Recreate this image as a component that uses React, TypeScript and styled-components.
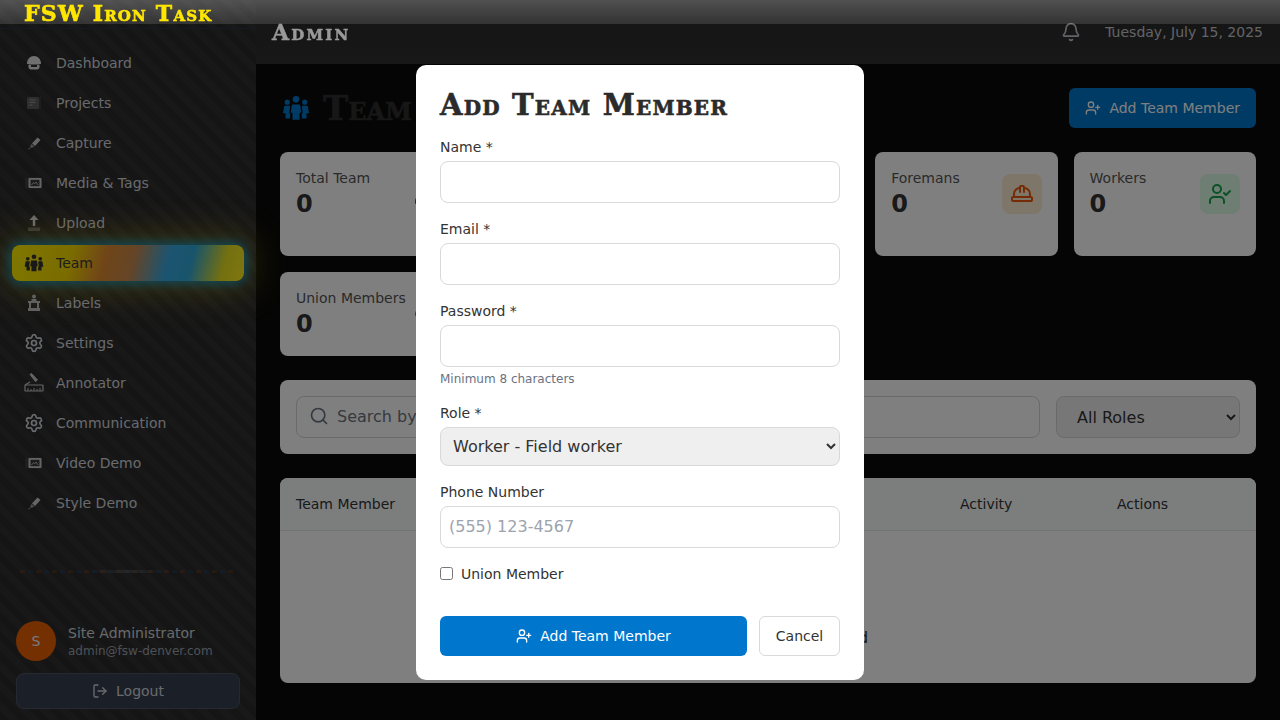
import React from "react";
import styled, { createGlobalStyle } from "styled-components";
import { Bell, HardHat, LogOut, Search, Settings, Shield, UserCheck, UserCog, UserPlus, Users, BadgeCheck } from "lucide-react";

const GlobalStyle = createGlobalStyle`
  html, body {
    margin: 0;
    height: 100%;
    overflow: hidden;
    background: #0a0a0a;
    font-family: "DejaVu Sans", sans-serif;
  }
  * {
    box-sizing: border-box;
  }
`;

const display = `"DejaVu Serif", "Liberation Serif", serif`;

const Shell = styled.div`
  display: flex;
  height: 720px;
  width: 1280px;
`;

const Sidebar = styled.aside`
  width: 256px;
  flex-shrink: 0;
  display: flex;
  flex-direction: column;
  background: repeating-linear-gradient(45deg, #2a2a2a 0 7px, #313131 7px 14px);
`;

const SidebarTop = styled.div`
  height: 29px;
  flex-shrink: 0;
  border-bottom: 1px solid #2a3340;
`;

const Nav = styled.nav`
  display: flex;
  flex-direction: column;
  gap: 4px;
  padding: 16px 12px 0;
`;

const NavItem = styled.div<{ $active?: boolean }>`
  height: 36px;
  display: flex;
  align-items: center;
  gap: 12px;
  padding: 0 12px;
  border-radius: 8px;
  font-size: 14px;
  color: ${(p) => (p.$active ? "#3a3a3a" : "#d1d5db")};
  background: ${(p) =>
    p.$active
      ? "linear-gradient(105deg, #ffee00 0%, #f5d800 26%, #e08a30 40%, #c98a50 52%, #3aa8e0 66%, #30a8d8 76%, #e8e020 90%, #ffee22 100%)"
      : "transparent"};
  box-shadow: ${(p) =>
    p.$active ? "0 0 12px 2px rgba(0, 174, 255, 0.75), 0 0 34px 8px rgba(255, 221, 0, 0.35)" : "none"};
`;

const NavIconBox = styled.span`
  width: 20px;
  height: 20px;
  display: flex;
  align-items: center;
  justify-content: center;
  flex-shrink: 0;
`;

const SidebarFooter = styled.div`
  margin-top: auto;
  padding: 0 16px 11px;
`;

const Divider = styled.div`
  height: 3px;
  margin: 0 4px 48px;
  opacity: 0.35;
  background:
    linear-gradient(90deg, transparent 30%, rgba(200, 200, 200, 0.5) 50%, transparent 68%),
    repeating-linear-gradient(90deg, #8a4a1a 0 5px, transparent 5px 8px, #1f4a6e 8px 13px, transparent 13px 16px);
`;

const UserRow = styled.div`
  display: flex;
  align-items: center;
  gap: 12px;
  margin-bottom: 12px;
`;

const Avatar = styled.div`
  width: 40px;
  height: 40px;
  border-radius: 50%;
  background: #e86000;
  color: #f3f4f6;
  display: flex;
  align-items: center;
  justify-content: center;
  font-size: 14px;
`;

const UserName = styled.div`
  font-size: 14px;
  line-height: 20px;
  color: #d1d5db;
`;

const UserEmail = styled.div`
  font-size: 12px;
  line-height: 16px;
  color: #9ca3af;
`;

const LogoutButton = styled.button`
  width: 100%;
  height: 36px;
  display: flex;
  align-items: center;
  justify-content: center;
  gap: 8px;
  border: 1px solid #4b5563;
  border-radius: 8px;
  background: #374151;
  color: #d1d5db;
  font: inherit;
  font-size: 14px;
`;

const Main = styled.main`
  flex: 1;
  min-width: 0;
  display: flex;
  flex-direction: column;
`;

const Header = styled.header`
  height: 64px;
  flex-shrink: 0;
  display: flex;
  align-items: center;
  justify-content: space-between;
  padding: 0 17px 0 16px;
  background: linear-gradient(180deg, #282828, #303030);
`;

const AdminTitle = styled.h2`
  position: relative;
  z-index: 11;
  margin: 0;
  font-family: ${display};
  font-variant: small-caps;
  font-size: 22px;
  font-weight: 700;
  letter-spacing: 2.2px;
  color: #9a9a9a;
  -webkit-text-stroke: 0.5px #9a9a9a;
`;

const HeaderRight = styled.div`
  display: flex;
  align-items: center;
  gap: 24px;
  color: #c4c8cf;
  font-size: 14px;
`;

const Content = styled.div`
  padding: 24px;
`;

const TitleRow = styled.div`
  display: flex;
  align-items: center;
  justify-content: space-between;
  margin-bottom: 24px;
`;

const PageTitle = styled.h1`
  display: flex;
  align-items: center;
  gap: 13px;
  margin: 0 0 0 2px;
  font-family: ${display};
  font-variant: small-caps;
  font-size: 34px;
  font-weight: 700;
  color: #2e2e2e;
  -webkit-text-stroke: 0.6px #2e2e2e;
`;

const PrimaryButton = styled.button<{ $grow?: boolean }>`
  height: 40px;
  display: flex;
  align-items: center;
  justify-content: center;
  gap: 8px;
  padding: 0 16px;
  border: none;
  border-radius: 6px;
  background: #0077cc;
  color: #fff;
  font: inherit;
  font-size: 14px;
  flex: ${(p) => (p.$grow ? 1 : "none")};
`;

const StatsGrid = styled.div`
  display: grid;
  grid-template-columns: repeat(5, 1fr);
  gap: 16px;
  margin-bottom: 24px;
`;

const StatCard = styled.div`
  display: flex;
  align-items: flex-start;
  justify-content: space-between;
  padding: 16px;
  border-radius: 8px;
  background: #fff;
`;

const StatText = styled.div`
  min-width: 0;
`;

const StatLabel = styled.div`
  font-size: 14px;
  line-height: 20px;
  color: #555;
`;

const StatValue = styled.div`
  font-size: 24px;
  line-height: 32px;
  font-weight: 700;
  color: #333;
`;

const StatIcon = styled.div<{ $bg: string; $fg: string }>`
  width: 40px;
  height: 40px;
  margin-top: 6px;
  flex-shrink: 0;
  display: flex;
  align-items: center;
  justify-content: center;
  border-radius: 8px;
  background: ${(p) => p.$bg};
  color: ${(p) => p.$fg};
`;

const FilterCard = styled.div`
  display: flex;
  gap: 16px;
  padding: 16px;
  margin-bottom: 24px;
  border-radius: 8px;
  background: #fff;
`;

const SearchBox = styled.div`
  flex: 1;
  height: 42px;
  display: flex;
  align-items: center;
  gap: 8px;
  padding: 0 12px 2px;
  border: 1px solid #d1d5db;
  border-radius: 8px;
  color: #6b7280;
  font-size: 16px;
`;

const RoleFilter = styled.select`
  width: 184px;
  height: 42px;
  padding: 0 16px;
  border: 1px solid #d1d5db;
  border-radius: 8px;
  background: #efefef;
  color: #333;
  font: inherit;
  font-size: 16px;
`;

const TableCard = styled.div`
  height: 205px;
  display: flex;
  flex-direction: column;
  border-radius: 8px;
  background: #fff;
  overflow: hidden;
`;

const TableHead = styled.div`
  height: 53px;
  flex-shrink: 0;
  display: grid;
  grid-template-columns: 221px 221px 222px 157px 123px;
  align-items: center;
  padding: 0 16px;
  background: #f9fafb;
  border-bottom: 1px solid #e5e7eb;
  font-size: 14px;
  color: #333;
`;

const EmptyState = styled.div`
  flex: 1;
  display: flex;
  align-items: flex-end;
  justify-content: center;
  padding-bottom: 36px;
  font-size: 16px;
  color: #333;
`;

const Overlay = styled.div`
  position: fixed;
  inset: 0;
  z-index: 10;
  display: flex;
  justify-content: center;
  align-items: flex-start;
  padding-top: 65px;
  background: rgba(0, 0, 0, 0.5);
`;

const Modal = styled.div`
  width: 448px;
  padding: 24px;
  border-radius: 10px;
  background: #fff;
`;

const ModalTitle = styled.h2`
  margin: 0 0 16px;
  font-family: ${display};
  font-variant: small-caps;
  font-size: 29px;
  line-height: 32px;
  font-weight: 700;
  letter-spacing: 1.2px;
  color: #2b2b2b;
  -webkit-text-stroke: 0.6px #2b2b2b;
  white-space: nowrap;
`;

const Field = styled.div`
  margin-bottom: 16px;
`;

const Label = styled.label`
  display: block;
  margin-bottom: 4px;
  font-size: 14px;
  line-height: 20px;
  color: #333;
`;

const Input = styled.input`
  display: block;
  width: 100%;
  height: 42px;
  padding: 0 8px 2px;
  border: 1px solid #d9d9d9;
  border-radius: 8px;
  background: #fff;
  font: inherit;
  font-size: 16px;
  color: #333;

  &::placeholder {
    color: #9ca3af;
  }
`;

const Hint = styled.div`
  margin-top: 4px;
  font-size: 12px;
  line-height: 16px;
  color: #6b7280;
`;

const RoleSelect = styled.select`
  display: block;
  width: 100%;
  height: 39px;
  padding: 0 8px;
  border: 1px solid #d9d9d9;
  border-radius: 8px;
  background: #efefef;
  font: inherit;
  font-size: 16px;
  color: #333;
`;

const CheckRow = styled.label`
  height: 20px;
  display: flex;
  align-items: center;
  gap: 8px;
  font-size: 14px;
  color: #333;

  input {
    margin: -1px 0 0;
    width: 13px;
    height: 13px;
  }
`;

const Actions = styled.div`
  display: flex;
  gap: 12px;
  margin-top: 32px;
`;

const CancelButton = styled.button`
  width: 81px;
  height: 40px;
  border: 1px solid #d9d9d9;
  border-radius: 6px;
  background: #fff;
  color: #333;
  font: inherit;
  font-size: 14px;
`;

const TopStrip = styled.div`
  position: fixed;
  top: 0;
  left: 0;
  right: 0;
  height: 24px;
  z-index: 20;
  padding-left: 24px;
  background: linear-gradient(180deg, rgba(255, 255, 255, 0.26), rgba(255, 255, 255, 0.13));
`;

const Logo = styled.div`
  font-family: ${display};
  font-variant: small-caps;
  font-size: 22px;
  line-height: 26px;
  font-weight: 700;
  letter-spacing: 1.2px;
  color: #ffe600;
  -webkit-text-stroke: 0.6px #ffe600;
  white-space: nowrap;
`;

const HelmetIcon = () => (
  <svg width="16" height="16" viewBox="0 0 16 16" fill="#e0e0e0">
    <path d="M1 9C1 4 4 1 8 1s7 3 7 8z" />
    <path d="M2.500 9.500h11v2.500c0 1.500-1 2.500-2.500 2.500H5c-1.500 0-2.500-1-2.500-2.500zM5 10v2h6v-2z" fillRule="evenodd" />
  </svg>
);

const ProjectsIcon = () => (
  <svg width="16" height="16" viewBox="0 0 16 16">
    <rect x="1" y="2" width="12" height="12" rx="1.500" fill="#5c5c5c" />
    <path d="M14 1.500v12" stroke="#4c4c4c" strokeWidth="1" />
    <path d="M3.500 5h6M3.500 7.500h6M3.500 10h3" stroke="#999" strokeWidth="1" />
  </svg>
);

const PencilIcon = () => (
  <svg width="16" height="16" viewBox="0 0 16 16" fill="#cfcfcf">
    <path d="M11.500 2.500l3 2.500-5.500 6-3-2.600z" />
    <path d="M5.500 9l2.800 2.500-3 1.500-1.300-1.300z" fill="#9a9a9a" />
    <path d="M1.500 14l2-1.500 1 1-1 1z" fill="#777" />
  </svg>
);

const MediaIcon = () => (
  <svg width="18" height="14" viewBox="0 0 18 14">
    <rect x="0" y="1.500" width="17" height="11" rx="1" fill="#3c3c3c" />
    <rect x="3.500" y="2" width="13" height="10" rx="1" fill="#c8c8c8" />
    <rect x="5.500" y="3.800" width="9" height="6.400" fill="#3a3a3a" />
    <path d="M6.500 9l2-2.500 1.200 1.300 1.300-1.800 2.200 3" stroke="#c8c8c8" strokeWidth="0.800" fill="none" />
  </svg>
);

const UploadIcon = () => (
  <svg width="16" height="18" viewBox="0 0 16 18" fill="#d8d8d8">
    <path d="M8 1l4.500 5H9.200v6H6.800V6H3.500z" />
    <rect x="2" y="13.500" width="12" height="3.500" fill="#6c6c6c" />
  </svg>
);

const LabelsIcon = () => (
  <svg width="16" height="18" viewBox="0 0 16 18" fill="#c0c0c0">
    <circle cx="8" cy="2.500" r="2" />
    <path d="M5.500 5h5v2h-5z" />
    <path d="M2 7h12v2h-1v5h1v3H2v-3h1V9H2zM5 9v5h6V9z" fillRule="evenodd" />
  </svg>
);

const AnnotatorIcon = () => (
  <svg width="20" height="20" viewBox="0 0 20 20" fill="none" stroke="#c8c8c8">
    <path d="M6 1.500l1.500-1 6 6.500-2 1.500z" fill="#c8c8c8" />
    <rect x="1" y="12" width="18" height="6" rx="0.500" strokeWidth="1.200" />
    <path d="M4 18v-3M7 18v-2M10 18v-3M13 18v-2M16 18v-3" strokeWidth="1" />
    <path d="M1 12l5-3" strokeWidth="1.200" />
  </svg>
);

const TeamIcon = ({ size, color }: { size: number; color: string }) => (
  <svg width={size} height={size} viewBox="0 0 24 24" fill={color}>
    <circle cx="12" cy="4.500" r="2.800" />
    <circle cx="4.500" cy="7" r="2.200" />
    <circle cx="19.500" cy="7" r="2.200" />
    <path d="M8.500 9h7l1 7h-1.500v6H9v-6H7.500z" />
    <path d="M2 10h5l-.8 6.500H7V21H3v-4.500H.8z" />
    <path d="M17 10h5l1.200 6.500H21V21h-4v-4.500h.8z" />
  </svg>
);

const navItems = [
  { label: "Dashboard", icon: <HelmetIcon /> },
  { label: "Projects", icon: <ProjectsIcon /> },
  { label: "Capture", icon: <PencilIcon /> },
  { label: "Media & Tags", icon: <MediaIcon /> },
  { label: "Upload", icon: <UploadIcon /> },
  { label: "Team", icon: <TeamIcon size={20} color="#333" />, active: true },
  { label: "Labels", icon: <LabelsIcon /> },
  { label: "Settings", icon: <Settings size={20} /> },
  { label: "Annotator", icon: <AnnotatorIcon /> },
  { label: "Communication", icon: <Settings size={20} /> },
  { label: "Video Demo", icon: <MediaIcon /> },
  { label: "Style Demo", icon: <PencilIcon /> },
];

const stats = [
  { label: "Total Team", icon: <Users size={24} />, bg: "#fff", fg: "#555" },
  { label: "Admins", icon: <Shield size={24} />, bg: "#fee2e2", fg: "#dc2626" },
  { label: "Project Managers", icon: <UserCog size={24} />, bg: "#ede9fe", fg: "#7c3aed" },
  { label: "Foremans", icon: <HardHat size={24} />, bg: "#ffedd5", fg: "#ea580c" },
  { label: "Workers", icon: <UserCheck size={24} />, bg: "#dcfce7", fg: "#16a34a" },
  { label: "Union Members", icon: <BadgeCheck size={24} />, bg: "#fff", fg: "#16a34a" },
];

export default function App() {
  return (
    <React.Fragment>
      <GlobalStyle />
      <Shell>
        <Sidebar>
          <SidebarTop />
          <Nav>
            {navItems.map((item) => (
              <NavItem key={item.label} $active={item.active}>
                <NavIconBox>{item.icon}</NavIconBox>
                {item.label}
              </NavItem>
            ))}
          </Nav>
          <SidebarFooter>
            <Divider />
            <UserRow>
              <Avatar>S</Avatar>
              <div>
                <UserName>Site Administrator</UserName>
                <UserEmail>admin@fsw-denver.com</UserEmail>
              </div>
            </UserRow>
            <LogoutButton>
              <LogOut size={16} />
              Logout
            </LogoutButton>
          </SidebarFooter>
        </Sidebar>
        <Main>
          <Header>
            <AdminTitle>Admin</AdminTitle>
            <HeaderRight>
              <Bell size={20} />
              Tuesday, July 15, 2025
            </HeaderRight>
          </Header>
          <Content>
            <TitleRow>
              <PageTitle>
                <TeamIcon size={28} color="#0077cc" />
                Team Management
              </PageTitle>
              <PrimaryButton>
                <UserPlus size={16} />
                Add Team Member
              </PrimaryButton>
            </TitleRow>
            <StatsGrid>
              {stats.map((s) => (
                <StatCard key={s.label}>
                  <StatText>
                    <StatLabel>{s.label}</StatLabel>
                    <StatValue>0</StatValue>
                  </StatText>
                  <StatIcon $bg={s.bg} $fg={s.fg}>
                    {s.icon}
                  </StatIcon>
                </StatCard>
              ))}
            </StatsGrid>
            <FilterCard>
              <SearchBox>
                <Search size={20} />
                Search by name, email...
              </SearchBox>
              <RoleFilter defaultValue="all">
                <option value="all">All Roles</option>
              </RoleFilter>
            </FilterCard>
            <TableCard>
              <TableHead>
                <div>Team Member</div>
                <div>Role</div>
                <div>Status</div>
                <div>Activity</div>
                <div>Actions</div>
              </TableHead>
              <EmptyState>No team members found</EmptyState>
            </TableCard>
          </Content>
        </Main>
      </Shell>
      <Overlay>
        <Modal>
          <ModalTitle>Add Team Member</ModalTitle>
          <Field>
            <Label>Name *</Label>
            <Input />
          </Field>
          <Field>
            <Label>Email *</Label>
            <Input />
          </Field>
          <Field>
            <Label>Password *</Label>
            <Input type="password" />
            <Hint>Minimum 8 characters</Hint>
          </Field>
          <Field>
            <Label>Role *</Label>
            <RoleSelect defaultValue="worker">
              <option value="worker">Worker - Field worker</option>
            </RoleSelect>
          </Field>
          <Field>
            <Label>Phone Number</Label>
            <Input placeholder="(555) 123-4567" />
          </Field>
          <CheckRow>
            <input type="checkbox" />
            Union Member
          </CheckRow>
          <Actions>
            <PrimaryButton $grow>
              <UserPlus size={16} />
              Add Team Member
            </PrimaryButton>
            <CancelButton>Cancel</CancelButton>
          </Actions>
        </Modal>
      </Overlay>
      <TopStrip>
        <Logo>FSW Iron Task</Logo>
      </TopStrip>
    </React.Fragment>
  );
}
